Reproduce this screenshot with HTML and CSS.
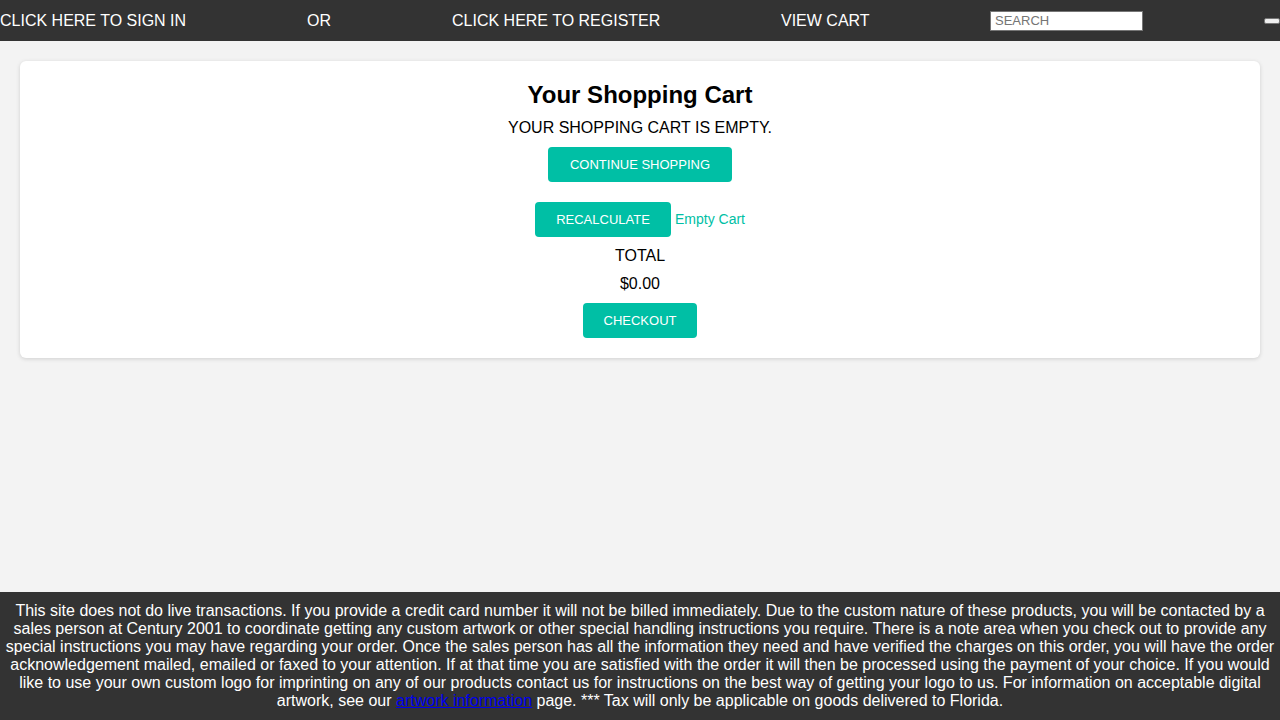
FILE: index.html
```html
<!DOCTYPE html>
<html>
<head>
<meta charset="utf-8">
<title>Your Shopping Cart</title>
<link rel="stylesheet" href="styles.css">
</head>
<body>
<nav class="topbar">
  <div class="cell cell-signin"><a class="nav-link" href="#">Click here to sign in</a></div>
  <div class="cell cell-or">or</div>
  <div class="cell cell-register"><a class="nav-link" href="#">Click here to register</a></div>
  <div class="cell cell-cart"><a class="nav-link" href="#">View Cart</a></div>
  <div class="cell cell-search"><input class="search" type="text" placeholder="SEARCH"></div>
  <div class="cell cell-go"><button class="go" type="submit"></button></div>
</nav>

<main class="page">
  <section class="card">
    <h2 class="title">Your Shopping Cart</h2>
    <p class="empty-msg">Your shopping cart is empty.</p>
    <div class="row row-continue"><a class="btn btn-wide" href="#">Continue Shopping</a></div>
    <div class="row row-recalc"><a class="btn btn-recalc" href="#">Recalculate</a><a class="link" href="#">Empty Cart</a></div>
    <div class="total-label">Total</div>
    <div class="total-value">$0.00</div>
    <div class="row row-checkout"><a class="btn btn-checkout" href="#">Checkout</a></div>
  </section>
</main>

<footer class="footer">
  This site does not do live transactions. If you provide a credit card number it will not be billed immediately. Due to the custom nature of these products, you will be contacted by a sales person at Century 2001 to coordinate getting any custom artwork or other special handling instructions you require. There is a note area when you check out to provide any special instructions you may have regarding your order. Once the sales person has all the information they need and have verified the charges on this order, you will have the order acknowledgement mailed, emailed or faxed to your attention. If at that time you are satisfied with the order it will then be processed using the payment of your choice. If you would like to use your own custom logo for imprinting on any of our products contact us for instructions on the best way of getting your logo to us. For information on acceptable digital artwork, see our <a class="footer-link" href="#">artwork information</a> page. *** Tax will only be applicable on goods delivered to Florida.
</footer>
</body>
</html>
```

FILE: styles.css
```css
html, body {
  margin: 0;
  padding: 0;
}
body {
  background: #f3f3f3;
  font-family: "Liberation Sans", Arial, Helvetica, sans-serif;
  font-size: 16px;
  color: #000;
}

.topbar {
  display: flex;
  align-items: center;
  height: 41px;
  background: #333333;
  color: #ffffff;
  text-transform: uppercase;
  white-space: nowrap;
}
.cell { flex: none; display: flex; align-items: center; }
.cell-signin { width: 307px; }
.cell-or { width: 145px; }
.cell-register { width: 329px; }
.cell-cart { width: 209px; }
.cell-search { width: 274px; }
.cell-go { width: 16px; }
.nav-link { color: #ffffff; text-decoration: none; }
.search {
  box-sizing: border-box;
  width: 153px;
  height: 20px;
  margin: 0;
  padding: 1px 3px 1px 4px;
  border: 1px solid #767676;
  font-family: "Liberation Sans", Arial, sans-serif;
  font-size: 13px;
  background: #fff;
}
.search::placeholder { color: #757575; }
.go {
  box-sizing: border-box;
  width: 16px;
  height: 6px;
  margin: 0;
  padding: 0;
  border: 1px solid #767676;
  border-radius: 2px;
  background: #efefef;
}

.page {
  padding: 20px;
}
.card {
  background: #ffffff;
  border-radius: 6px;
  box-shadow: 0 1px 4px rgba(0, 0, 0, 0.15);
  padding: 20px;
  text-align: center;
}
.title {
  margin: 0;
  font-size: 24px;
  line-height: 28px;
  font-weight: bold;
}
.empty-msg {
  margin: 10px 0 0;
  line-height: 18px;
  text-transform: uppercase;
}
.row { display: flex; justify-content: center; align-items: center; }
.row-continue { margin-top: 10px; }
.row-recalc { margin-top: 20px; gap: 4px; }
.row-checkout { margin-top: 10px; }
.btn {
  display: inline-flex;
  align-items: center;
  justify-content: center;
  box-sizing: border-box;
  height: 35px;
  padding: 0 20px;
  border-radius: 4px;
  background: #00bfa5;
  color: #ffffff;
  font-size: 13px;
  text-transform: uppercase;
  text-decoration: none;
}
.btn-wide { width: 184px; }
.btn-recalc { width: 136px; }
.btn-checkout { width: 114px; }
.link {
  color: #00bfa5;
  font-size: 14px;
  line-height: 16px;
  margin-bottom: 2px;
  text-decoration: none;
}
.total-label {
  margin-top: 10px;
  line-height: 18px;
  text-transform: uppercase;
}
.total-value {
  margin-top: 10px;
  line-height: 18px;
}

.footer {
  position: fixed;
  left: 0;
  right: 0;
  bottom: 0;
  box-sizing: border-box;
  height: 128px;
  padding: 10px 5px 9px;
  background: #333333;
  color: #ffffff;
  text-align: center;
  font-size: 16px;
  line-height: 18px;
}
.footer-link { color: #0000ee; text-decoration: underline; }
```
